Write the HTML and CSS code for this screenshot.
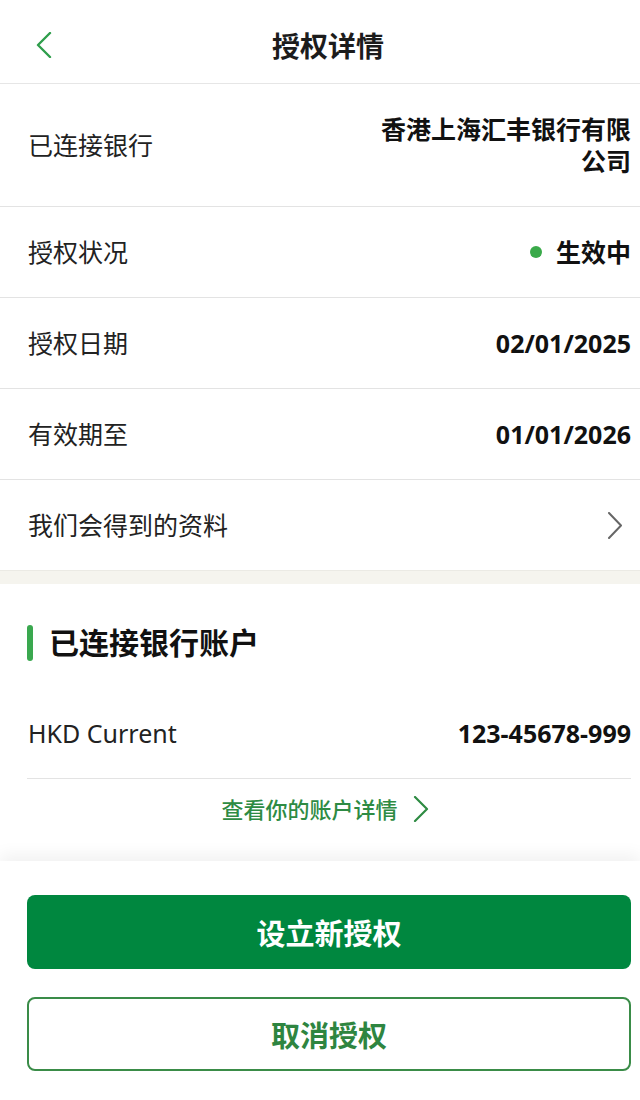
FILE: index.html
```html
<!DOCTYPE html>
<html lang="zh-CN">
<head>
  <meta charset="UTF-8">
  <title>授权详情</title>
  <link rel="stylesheet" href="styles.css">
</head>
<body>
  <header class="topbar">
    <button class="back" aria-label="返回">
      <svg width="16" height="26" viewBox="0 0 16 26"><polyline points="14,1 2,13 14,25" fill="none" stroke="#2f9e4c" stroke-width="2.4" stroke-linecap="round" stroke-linejoin="round"/></svg>
    </button>
    <h1>授权详情</h1>
  </header>

  <div class="info">
    <div class="row">
      <span class="label">已连接银行</span>
      <span class="value wrap">香港上海汇丰银行有限公司</span>
    </div>
    <div class="row">
      <span class="label">授权状况</span>
      <span class="value status"><i class="dot"></i>生效中</span>
    </div>
    <div class="row">
      <span class="label">授权日期</span>
      <span class="value">02/01/2025</span>
    </div>
    <div class="row">
      <span class="label">有效期至</span>
      <span class="value">01/01/2026</span>
    </div>
    <div class="row last">
      <span class="label">我们会得到的资料</span>
      <svg class="arrow" width="16" height="27" viewBox="0 0 16 27"><polyline points="2,1 14,13.5 2,26" fill="none" stroke="#666" stroke-width="2" stroke-linecap="round" stroke-linejoin="round"/></svg>
    </div>
  </div>

  <div class="band"></div>

  <section class="accounts">
    <h2>已连接银行账户</h2>
    <div class="row acct">
      <span class="label">HKD Current</span>
      <span class="value">123-45678-999</span>
    </div>
    <a class="more" href="#">查看你的账户详情
      <svg width="16" height="26" viewBox="0 0 16 26"><polyline points="2,1 14,13 2,25" fill="none" stroke="#2e8b43" stroke-width="2.2" stroke-linecap="round" stroke-linejoin="round"/></svg>
    </a>
  </section>

  <footer class="actions">
    <button class="btn primary">设立新授权</button>
    <button class="btn outline">取消授权</button>
  </footer>
</body>
</html>
```

FILE: styles.css
```css
body {
  margin: 0;
  background: #fff;
  color: #1c1c1c;
  font-family: "Noto Sans", "Noto Sans CJK SC", sans-serif;
}

.topbar {
  position: relative;
  height: 83px;
  display: flex;
  align-items: center;
  justify-content: center;
  padding-left: 16px;
  border-bottom: 1px solid #e6e6e6;
}

.topbar h1 {
  margin: 0;
  font-size: 28px;
  font-weight: 700;
  line-height: 36px;
  padding-top: 8px;
}

.back {
  position: absolute;
  left: 36px;
  top: 32px;
  padding: 0;
  border: none;
  background: none;
  display: flex;
}

.row {
  display: flex;
  align-items: center;
  justify-content: space-between;
  padding: 29px 9px 29px 28px;
  border-bottom: 1px solid #e3e3e3;
  font-size: 25px;
  line-height: 32px;
}

.row.last {
  border-bottom: none;
}

.label {
  color: #222;
}

.value {
  font-weight: 700;
  text-align: right;
  color: #111;
}

.value.wrap {
  max-width: 256px;
}

.status {
  display: flex;
  align-items: center;
  gap: 14px;
}

.dot {
  width: 12px;
  height: 12px;
  border-radius: 50%;
  background: #3aaa4a;
}

.arrow {
  margin-right: 8px;
}

.band {
  height: 13px;
  background: #f5f4ee;
  border-top: 1px solid #ebeae4;
}

.accounts {
  padding: 41px 9px 38px 27px;
}

.accounts h2 {
  margin: 0;
  display: flex;
  align-items: center;
  font-size: 30px;
  line-height: 36px;
  font-weight: 700;
  color: #111;
}

.accounts h2::before {
  content: "";
  width: 6px;
  height: 36px;
  border-radius: 3px;
  background: #3aa84f;
  margin-right: 16px;
}

.row.acct {
  margin-top: 27px;
  padding-left: 1px;
  padding-right: 0;
}

.more {
  display: flex;
  align-items: center;
  justify-content: center;
  gap: 15px;
  margin-top: 16px;
  padding-right: 8px;
  font-size: 22px;
  line-height: 28px;
  font-weight: 500;
  color: #2e8b43;
  text-decoration: none;
}

.actions {
  display: flex;
  flex-direction: column;
  gap: 28px;
  padding: 34px 9px 30px 27px;
  box-shadow: 0 -6px 16px rgba(0, 0, 0, 0.06);
}

.btn {
  height: 74px;
  border-radius: 8px;
  font-family: inherit;
  font-size: 29px;
  font-weight: 700;
  cursor: pointer;
}

.primary {
  background: #00873f;
  color: #fff;
  border: none;
}

.outline {
  background: #fff;
  color: #2e8540;
  border: 2px solid #3a8c48;
}
```
